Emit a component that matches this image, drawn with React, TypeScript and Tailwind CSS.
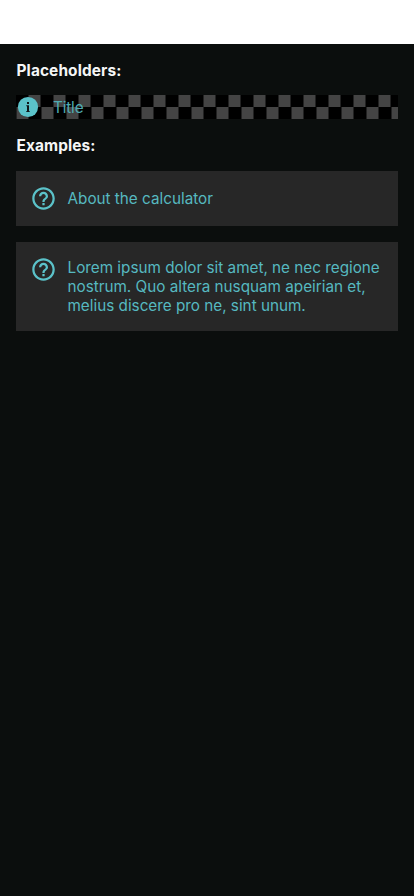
import React from "react";

function InfoIcon() {
  return (
    <svg viewBox="0 0 24 24" className="h-6 w-6 shrink-0" fill="#5bc2c9">
      <circle cx="12" cy="12" r="10.1" />
      <path fill="#10181a" d="M11 7h2v2h-2zM10.3 10.3H13V16h.7v1h-3.4v-1h.7v-4.7h-.7z" />
    </svg>
  );
}

function HelpIcon() {
  return (
    <svg viewBox="0 0 24 24" className="mt-[0.5px] h-[27px] w-[27px] shrink-0" fill="#5bc2c9">
      <path d="M11 18h2v-2h-2v2zm1-16C6.48 2 2 6.48 2 12s4.48 10 10 10 10-4.48 10-10S17.52 2 12 2zm0 18c-4.41 0-8-3.59-8-8s3.59-8 8-8 8 3.59 8 8-3.59 8-8 8zm0-14c-2.21 0-4 1.79-4 4h2c0-1.1.9-2 2-2s2 .9 2 2c0 2-3 1.75-3 5h2c0-2.25 3-2.5 3-5 0-2.21-1.79-4-4-4z" />
    </svg>
  );
}

function Heading({ children }: { children: React.ReactNode }) {
  return (
    <h2 className="h-5 pl-[0.5px] text-[15.4px] leading-5 font-bold tracking-[0.12px] text-[#f5f6f6]">
      {children}
    </h2>
  );
}

function Card({ lines, className, textClassName }: { lines: string[]; className: string; textClassName: string }) {
  return (
    <div className={`flex bg-[#272727] pl-[13.5px] ${className}`}>
      <HelpIcon />
      <div className={`ml-[11px] text-[15.28px] leading-[19px] whitespace-nowrap text-[#56b9c0] ${textClassName}`}>
        {lines.map((line) => (
          <div key={line}>{line}</div>
        ))}
      </div>
    </div>
  );
}

export default function App() {
  return (
    <div className="flex h-[896px] w-full flex-col bg-[#0b0e0d] font-['Inter',sans-serif]">
      <div className="h-11 shrink-0 bg-white" />
      <main className="flex flex-col px-4 pt-[17px]">
        <Heading>Placeholders:</Heading>
        <div className="mt-[14px] flex h-6 items-center bg-[conic-gradient(#000_25%,#444_0_50%,#000_0_75%,#444_0)] bg-[length:25px_24px] bg-[position:12.5px_0]">
          <InfoIcon />
          <span className="ml-[13px] pt-[2px] text-[15.28px] leading-5 tracking-[-0.15px] text-[#4fabb2]">Title</span>
        </div>
        <div className="mt-[17px]">
          <Heading>Examples:</Heading>
        </div>
        <Card className="mt-[15px] h-[54.5px] pt-[13px]" textClassName="pt-[5px]" lines={["About the calculator"]} />
        <Card
          className="mt-4 h-[89.5px] pt-[13.5px]"
          textClassName="pt-[2.5px]"
          lines={[
            "Lorem ipsum dolor sit amet, ne nec regione",
            "nostrum. Quo altera nusquam apeirian et,",
            "melius discere pro ne, sint unum.",
          ]}
        />
      </main>
    </div>
  );
}
